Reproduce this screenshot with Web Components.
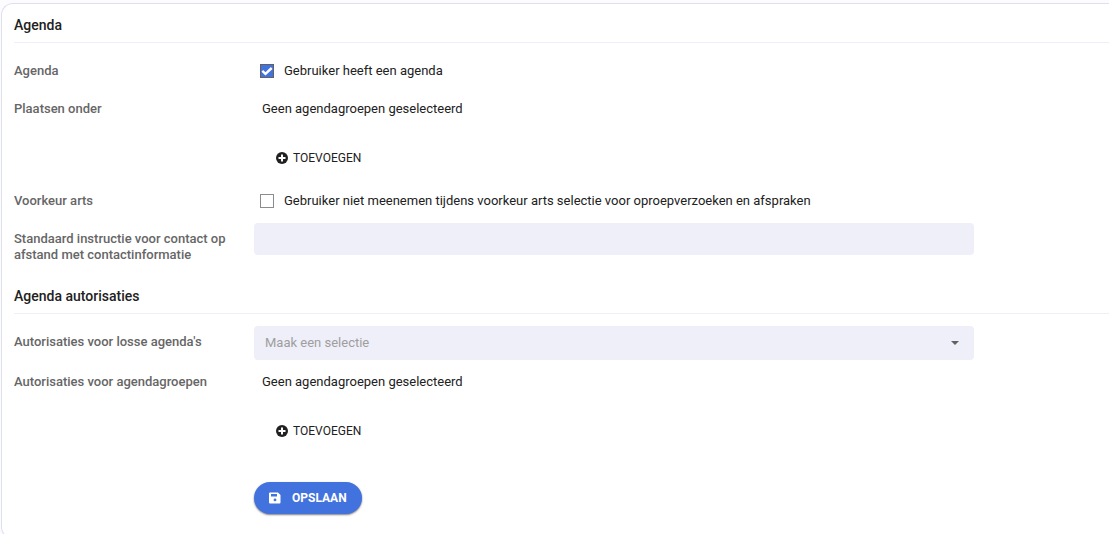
<!DOCTYPE html>
<html lang="nl">
<head>
<meta charset="utf-8">
<title>Agenda</title>
<style>
body {
    margin: 0;
    padding: 3px 0 0 1px;
    overflow-x: hidden;
    background-color: #fcfbfe;
    color: #212121;
    font: 13px/16px Roboto, "Liberation Sans", sans-serif;
}
</style>
</head>
<body>
<settings-card>
    <agenda-form></agenda-form>
</settings-card>

<script>
function makeTemplate(html) {
    const template = document.createElement("template");
    template.innerHTML = html;
    return template;
}

// attaches an open shadow root with a copy of the class's template
class BaseElement extends HTMLElement {
    constructor() {
        super();
        this.attachShadow({mode: "open"});
        this.shadowRoot.appendChild(this.constructor.template.content.cloneNode(true));
    }
}

class SettingsCard extends BaseElement {
    static template = makeTemplate(`
<style>
:host {
    display: block;
    box-sizing: border-box;
    padding: 11px 0 24px 12px;
    background-color: #fff;
    border: 1px solid #e0dfec;
    border-right: none;
    border-radius: 12px 0 0 12px;
}
</style>
<slot></slot>
`);
}

class FormSection extends BaseElement {
    static template = makeTemplate(`
<style>
:host {
    display: block;
}
.title {
    padding-bottom: 7px;
    margin-bottom: 12px;
    border-bottom: 1px solid #efeff9;
}
::slotted(h2) {
    margin: 0;
    font-size: 14px;
    font-weight: 500;
    line-height: 20px;
}
.rows {
    display: flex;
    flex-direction: column;
    gap: 6px;
}
</style>
<div class="title"><slot name="title"></slot></div>
<div class="rows"><slot></slot></div>
`);
}

class FormRow extends BaseElement {
    static template = makeTemplate(`
<style>
:host {
    display: grid;
    grid-template-columns: 240px minmax(0, 720px);
}
.label {
    padding: 8px 16px 0 0;
    color: #666;
    font-weight: 500;
}
.field {
    min-height: 32px;
}
</style>
<div class="label"><slot name="label"></slot></div>
<div class="field"><slot></slot></div>
`);
}

class GroupPicker extends BaseElement {
    static template = makeTemplate(`
<style>
:host {
    display: block;
    padding: 8px 8px 4px;
}
button {
    display: flex;
    align-items: center;
    gap: 5px;
    height: 34px;
    margin-top: 24px;
    padding: 0 14px;
    background: none;
    border: none;
    border-radius: 17px;
    color: inherit;
    font: inherit;
    font-size: 12px;
    cursor: pointer;
}
</style>
<div><slot></slot></div>
<button type="button">
    <svg width="12" height="12" viewBox="0 0 12 12" aria-hidden="true">
        <circle cx="6" cy="6" r="6" fill="#212121"/>
        <path d="M6 2.5v7M2.5 6h7" stroke="#fff" stroke-width="2"/>
    </svg>
    <span>TOEVOEGEN</span>
</button>
`);
}

class SelectBox extends BaseElement {
    static template = makeTemplate(`
<style>
:host {
    display: grid;
    align-items: center;
}
::slotted(select), svg {
    grid-area: 1 / 1;
}
svg {
    justify-self: end;
    margin-right: 15px;
    pointer-events: none;
}
</style>
<slot></slot>
<svg width="8" height="4" viewBox="0 0 8 4" aria-hidden="true"><path d="M0 0h8L4 4z" fill="#616161"/></svg>
`);
}

class AgendaForm extends BaseElement {
    static template = makeTemplate(`
<style>
:host {
    display: block;
}
form-section + form-section {
    margin-top: 23px;
}
.check {
    display: flex;
    align-items: center;
    gap: 10px;
    height: 32px;
    padding-left: 6px;
}
input[type=checkbox] {
    appearance: none;
    box-sizing: border-box;
    width: 14px;
    height: 14px;
    margin: 0;
    background-color: #fff;
    border: 1px solid #8c8c8c;
}
input[type=checkbox]:checked {
    border-color: #616161;
    background: #4272de url("data:image/svg+xml,%3Csvg xmlns='http://www.w3.org/2000/svg' viewBox='0 0 12 12'%3E%3Cpath d='M1.3 5.8l3.2 3 6.2-5.8' fill='none' stroke='white' stroke-width='2.4'/%3E%3C/svg%3E") center / 12px no-repeat;
}
input[type=text], select {
    display: block;
    box-sizing: border-box;
    width: 100%;
    height: 32px;
    padding: 0 11px;
    background-color: #efeff9;
    border: none;
    border-radius: 4px;
    color: inherit;
    font: inherit;
}
select {
    appearance: none;
    height: 34px;
    color: #9e9e9e;
}
.save {
    display: flex;
    align-items: center;
    gap: 11px;
    height: 32px;
    margin: 30px 0 0 240px;
    padding: 0 15px;
    background-color: #4272de;
    border: none;
    border-radius: 16px;
    box-shadow: 0 1px 2px rgba(0, 0, 0, 0.5);
    color: #fff;
    font: inherit;
    font-size: 12px;
    font-weight: 700;
    cursor: pointer;
}
</style>
<form>
    <form-section>
        <h2 slot="title">Agenda</h2>
        <form-row>
            <span slot="label">Agenda</span>
            <div class="check">
                <input type="checkbox" id="has-agenda" checked>
                <label for="has-agenda">Gebruiker heeft een agenda</label>
            </div>
        </form-row>
        <form-row>
            <span slot="label">Plaatsen onder</span>
            <group-picker>Geen agendagroepen geselecteerd</group-picker>
        </form-row>
        <form-row>
            <span slot="label">Voorkeur arts</span>
            <div class="check">
                <input type="checkbox" id="skip-doctor">
                <label for="skip-doctor">Gebruiker niet meenemen tijdens voorkeur arts selectie voor oproepverzoeken en afspraken</label>
            </div>
        </form-row>
        <form-row>
            <label slot="label" for="instruction">Standaard instructie voor contact op afstand met contactinformatie</label>
            <input type="text" id="instruction">
        </form-row>
    </form-section>
    <form-section>
        <h2 slot="title">Agenda autorisaties</h2>
        <form-row>
            <label slot="label" for="agendas">Autorisaties voor losse agenda's</label>
            <select-box>
                <select id="agendas"><option>Maak een selectie</option></select>
            </select-box>
        </form-row>
        <form-row>
            <span slot="label">Autorisaties voor agendagroepen</span>
            <group-picker>Geen agendagroepen geselecteerd</group-picker>
        </form-row>
    </form-section>
    <button type="button" class="save">
        <svg width="12" height="12" viewBox="0 0 12 12" aria-hidden="true">
            <path fill="#fff" fill-rule="evenodd" d="M1 .5h8L11.5 3v7.5a1 1 0 0 1-1 1H1a1 1 0 0 1-1-1v-9a1 1 0 0 1 1-1zM2 2v2.5h6V2zM6 6.5a1.4 1.4 0 1 0 0 2.8 1.4 1.4 0 0 0 0-2.8z"/>
        </svg>
        OPSLAAN
    </button>
</form>
`);
}

customElements.define("settings-card", SettingsCard);
customElements.define("form-section", FormSection);
customElements.define("form-row", FormRow);
customElements.define("group-picker", GroupPicker);
customElements.define("select-box", SelectBox);
customElements.define("agenda-form", AgendaForm);
</script>
</body>
</html>
